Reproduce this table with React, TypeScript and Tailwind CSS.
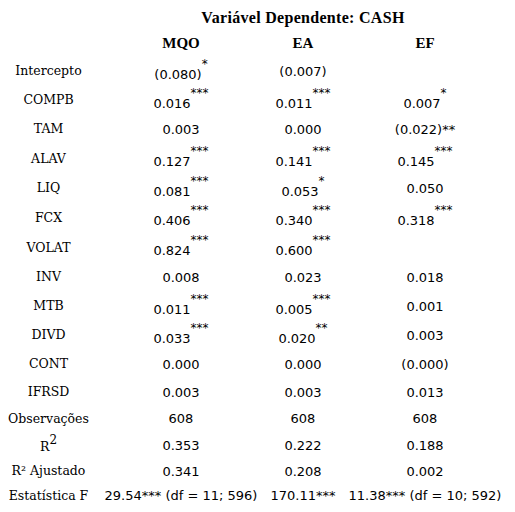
import React from "react";

type Cell = [string, string?] | null;

const rows: { label: React.ReactNode; h: string; cells: Cell[] }[] = [
  { label: "Intercepto", h: "h-[29px]", cells: [["(0.080)", "*"], ["(0.007)"], null] },
  { label: "COMPB", h: "h-[29px]", cells: [["0.016", "***"], ["0.011", "***"], ["0.007", "*"]] },
  { label: "TAM", h: "h-[29px]", cells: [["0.003"], ["0.000"], ["(0.022)**"]] },
  { label: "ALAV", h: "h-[30px]", cells: [["0.127", "***"], ["0.141", "***"], ["0.145", "***"]] },
  { label: "LIQ", h: "h-[29px]", cells: [["0.081", "***"], ["0.053", "*"], ["0.050"]] },
  { label: "FCX", h: "h-[30px]", cells: [["0.406", "***"], ["0.340", "***"], ["0.318", "***"]] },
  { label: "VOLAT", h: "h-[30px]", cells: [["0.824", "***"], ["0.600", "***"], null] },
  { label: "INV", h: "h-[29px]", cells: [["0.008"], ["0.023"], ["0.018"]] },
  { label: "MTB", h: "h-[29px]", cells: [["0.011", "***"], ["0.005", "***"], ["0.001"]] },
  { label: "DIVD", h: "h-[29px]", cells: [["0.033", "***"], ["0.020", "**"], ["0.003"]] },
  { label: "CONT", h: "h-[29px]", cells: [["0.000"], ["0.000"], ["(0.000)"]] },
  { label: "IFRSD", h: "h-[27px]", cells: [["0.003"], ["0.003"], ["0.013"]] },
  { label: "Observações", h: "h-[26px]", cells: [["608"], ["608"], ["608"]] },
  {
    label: (
      <span className="inline-block translate-y-[2px]">
        R<span className="relative -top-[7px] text-[12px]">2</span>
      </span>
    ),
    h: "h-[27px]",
    cells: [["0.353"], ["0.222"], ["0.188"]],
  },
  { label: "R² Ajustado", h: "h-[25px]", cells: [["0.341"], ["0.208"], ["0.002"]] },
  {
    label: "Estatística F",
    h: "h-[24px]",
    cells: [["29.54*** (df = 11; 596)"], ["170.11***"], ["11.38*** (df = 10; 592)"]],
  },
];

const serif = "font-['DejaVu_Serif',serif]";
const sans = "font-['DejaVu_Sans',sans-serif]";

function Value({ cell }: { cell: Cell }) {
  if (!cell) return <div />;
  const [num, sup] = cell;
  return (
    <div className={`flex items-center justify-center whitespace-nowrap ${sans} text-[13px]`}>
      {sup ? (
        <>
          <span className="inline-block translate-y-[3px]">{num}</span>
          <span className="inline-block -translate-y-[8px] text-[12px] leading-none">{sup}</span>
        </>
      ) : (
        <span>{num}</span>
      )}
    </div>
  );
}

export default function App() {
  return (
    <div className="w-[515px] h-[512px] bg-white text-black pt-[5px]">
      <div className="grid grid-cols-[97px_168px_76px_168px]">
        <div className="h-[25px]" />
        <div className="col-span-3 h-[25px] flex items-center justify-center font-['Liberation_Serif',serif] font-bold text-[16px] tracking-[0.3px]">
          Variável Dependente: CASH
        </div>

        <div className="h-[27px]" />
        {["MQO", "EA", "EF"].map((h) => (
          <div
            key={h}
            className="h-[27px] flex items-center justify-center font-['Liberation_Serif',serif] font-bold text-[15px]"
          >
            {h}
          </div>
        ))}

        {rows.map((r, i) => (
          <React.Fragment key={i}>
            <div className={`${r.h} flex items-center justify-center whitespace-nowrap ${serif} text-[12.5px]`}>
              {r.label}
            </div>
            {r.cells.map((c, j) => (
              <div key={j} className={`${r.h} flex items-center justify-center`}>
                <Value cell={c} />
              </div>
            ))}
          </React.Fragment>
        ))}
      </div>
    </div>
  );
}
